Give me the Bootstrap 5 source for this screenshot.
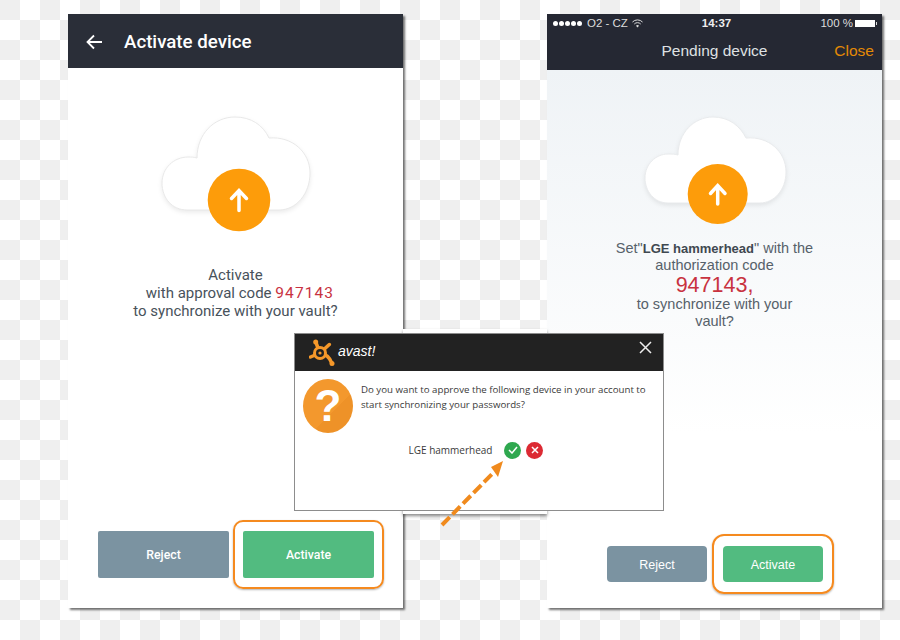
<!DOCTYPE html>
<html lang="en">
<head>
    <meta charset="UTF-8">
    <meta name="viewport" content="width=device-width, initial-scale=1.0">
    <title>Activate device</title>
    <link href="https://cdn.jsdelivr.net/npm/bootstrap@5.3.0/dist/css/bootstrap.min.css" rel="stylesheet">
    <style>
        html, body { margin: 0; height: 640px; overflow: hidden; }
        body {
            width: 900px;
            position: relative;
            font-family: Roboto, "Liberation Sans", sans-serif;
            background-color: #fff;
            background-image: conic-gradient(#fff 0 25%, #efefef 0 50%, #fff 0 75%, #efefef 0);
            background-size: 40px 40px;
        }
        .phone-win {
            position: absolute;
            top: 14px;
            width: 335px;
            height: 594px;
            background: #fff;
            box-shadow: 2px 2px 2px rgba(0,0,0,.55);
        }
        .win-android { left: 68px; }
        .win-ios { left: 547px; background: linear-gradient(#eff3f6 56px, #fff 420px); }
        .bar-dark { background: #2a2e38; color: #fff; }
        .bar-android { height: 54px; padding-left: 18px; gap: 21px; }
        .bar-android svg { margin-top: 1px; }
        .bar-android .bar-title { font-size: 18.700px; font-weight: 500; padding-top: 2px; }
        .bar-ios { height: 56px; background: #252833; }
        .status-line { height: 18px; padding: 0 6px; font: 11.500px "Liberation Sans", sans-serif; color: #ddd; }
        .status-line b { color: #eee; }
        .status-side { width: 120px; gap: 4px; white-space: nowrap; }
        .status-right { width: 116px; gap: 2px; }
        .sig-dot { width: 5px; height: 5px; margin-right: 1px; border-radius: 50%; background: #fff; }
        .batt { width: 20px; height: 7px; margin-right: 1px; background: #fff; position: relative; }
        .batt::after { content: ""; position: absolute; right: -2px; top: 2px; width: 1px; height: 3px; background: #ddd; }
        .ios-title { font: 15.500px "Liberation Sans", sans-serif; color: #dfe1e3; height: 38px; position: relative; }
        .ios-close { position: absolute; right: 8px; color: #e48a05; }
        .cloud-art { display: block; }
        .cloud-android { margin: 46px 0 0 87px; }
        .cloud-ios { margin: 42px 0 0 94px; }
        .cloud-shape { filter: drop-shadow(0 2px 2px rgba(0,0,0,.08)); }
        .msg-android { font-size: 15px; line-height: 18.200px; color: #48525b; margin-top: 27px; }
        .msg-android .code-red { font-size: 15.500px; letter-spacing: 1.100px; }
        .code-line { display: inline-block; padding-left: 9px; }
        .msg-ios { font: 14.500px/17px "Liberation Sans", sans-serif; color: #56616a; margin-top: 13px; }
        .msg-ios b { font-size: 13px; color: #3f4850; }
        .code-red { color: #c8323f; }
        .code-big { font-size: 21.500px; line-height: 22px; }
        .btn-mock {
            display: flex; align-items: center; justify-content: center;
            border-radius: 2px; color: #fff; font-size: 12.300px; font-weight: 500; padding: 2px 0 0; border: 0;
        }
        .btn-gray { background: #7b93a1; }
        .btn-grn { background: #52bb80; }
        .btn-gray:hover, .btn-gray:active { background: #7b93a1; color: #fff; }
        .btn-grn:hover, .btn-grn:active { background: #52bb80; color: #fff; }
        .row-android { position: absolute; left: 30px; bottom: 30px; gap: 14px; }
        .row-android .btn-mock { width: 131px; height: 47px; }
        .row-ios { position: absolute; left: 60px; bottom: 26px; gap: 16px; }
        .row-ios .btn-mock { width: 100px; height: 36px; border-radius: 4px; font: 12.500px "Liberation Sans", sans-serif; }
        .halo {
            position: absolute;
            border: 2.500px solid #f58a1f;
            border-radius: 10px;
            box-shadow: 0 1px 2px rgba(0,0,0,.3);
        }
        .halo-android { left: 233px; top: 520px; width: 151px; height: 69px; }
        .halo-ios { left: 712px; top: 534px; width: 122px; height: 60px; border-radius: 12px; }
        .dlg-back { position: absolute; left: 403px; top: 329px; width: 144px; height: 185px; background: #fff; box-shadow: 0 2px 3px rgba(0,0,0,.45); }
        .dlg {
            position: absolute; left: 294px; top: 333px; width: 370px; height: 178px;
            background: #fff; border: 1px solid #8d8d8d;
            font: 9.700px "Open Sans", sans-serif; color: #3a3a3a;
        }
        .dlg-head { height: 37px; background: #222; padding: 0 11px 0 14px; }
        .dlg-logo { font: italic 400 14px "Liberation Sans", sans-serif; color: #fff; margin: 0 0 4px 1px; }
        .dlg-close { margin-bottom: 10px; }
        .dlg-main { padding: 8px 10px 0 8px; gap: 8px; }
        .ask-mark {
            width: 50px; height: 54px; border-radius: 50%; flex: none; color: #fff;
            background: linear-gradient(135deg, #f3982d 60%, #ee9228 60%);
            font: 700 44px "Liberation Sans", sans-serif;
        }
        .ask-text { line-height: 15px; padding-top: 2.500px; white-space: nowrap; }
        .device-line { gap: 5px; margin-top: 8.500px; margin-right: 6px; }
        .device-name { font-size: 10px; }
        .round-ok, .round-no { width: 17px; height: 17px; border-radius: 50%; flex: none; }
        .round-ok { background: #2fa84f; margin-left: 7px; }
        .round-no { background: #dc2a33; }
        .arrow-art { position: absolute; left: 436px; top: 458px; }
    </style>
</head>
<body>
    <div class="phone-win win-android">
        <div class="bar-dark bar-android d-flex align-items-center">
            <svg width="17" height="16" viewBox="0 0 17 16"><path d="M16 8H2M8 1.500 1.500 8 8 14.500" fill="none" stroke="#fff" stroke-width="1.800"/></svg>
            <span class="bar-title">Activate device</span>
        </div>
        <svg class="cloud-art cloud-android" width="160" height="125" viewBox="155 114 160 125">
            <path class="cloud-shape" d="M187 210C172 210 162 198 162 183 162 168 174 157 188 157 191 157 194 157 197 158 197 134 214 117 235 117 251 117 263 125 269 138 292 136 310 152 310 173 310 194 296 210 279 210Z" fill="#fff" stroke="#e8e8e8"/>
            <circle cx="239" cy="200" r="31.300" fill="#fd9c0a"/>
            <path d="M239 210.500V191M231.500 198.500 239 190.500l7.500 8" fill="none" stroke="#fff" stroke-width="3.500" stroke-linecap="round"/>
        </svg>
        <div class="msg-android text-center">Activate<br><span class="code-line">with approval code <span class="code-red">947143</span></span><br>to synchronize with your vault?</div>
        <div class="row-android d-flex">
            <button class="btn btn-mock btn-gray">Reject</button>
            <button class="btn btn-mock btn-grn">Activate</button>
        </div>
    </div>

    <div class="phone-win win-ios">
        <div class="bar-ios">
            <div class="status-line d-flex align-items-center justify-content-between">
                <div class="status-side d-flex align-items-center">
                    <span class="d-flex"><i class="sig-dot"></i><i class="sig-dot"></i><i class="sig-dot"></i><i class="sig-dot"></i><i class="sig-dot"></i></span>
                    <span>O2 - CZ</span>
                    <svg width="11" height="9" viewBox="0 0 11 9"><path d="M.5 3a7 7 0 0 1 10 0M2.300 5a4.500 4.500 0 0 1 6.400 0" fill="none" stroke="#ddd"/><path d="M5.500 8.500 4 6.700a2.200 2.200 0 0 1 3 0z" fill="#ddd"/></svg>
                </div>
                <b>14:37</b>
                <div class="status-right d-flex align-items-center justify-content-end">
                    <span>100 %</span><span class="batt"></span>
                </div>
            </div>
            <div class="ios-title d-flex align-items-center justify-content-center">Pending device<span class="ios-close">Close</span></div>
        </div>
        <svg class="cloud-art cloud-ios" width="150" height="115" viewBox="641 112 150 115">
            <path class="cloud-shape" d="M668 203C654 203 645 191 645 178 645 164 656 154 668 154 672 154 675 154 678 155 678 133 694 117 713 117 729 117 740 126 746 138 769 136 786 152 786 172 786 190 774 203 760 203Z" fill="#fff" stroke="#e8eaec"/>
            <circle cx="717.700" cy="194" r="30" fill="#fd9c0a"/>
            <path d="M717.700 204V186M710.500 193.500 717.700 185.500l7.300 8" fill="none" stroke="#fff" stroke-width="3.500" stroke-linecap="round"/>
        </svg>
        <div class="msg-ios text-center">Set"<b>LGE hammerhead</b>" with the<br>authorization code<br><span class="code-red code-big">947143,</span><br>to synchronize with your<br>vault?</div>
        <div class="row-ios d-flex">
            <button class="btn btn-mock btn-gray">Reject</button>
            <button class="btn btn-mock btn-grn">Activate</button>
        </div>
    </div>

    <div class="halo halo-android"></div>
    <div class="halo halo-ios"></div>

    <div class="dlg-back"></div>
    <div class="dlg">
        <div class="dlg-head d-flex align-items-center justify-content-between">
            <div class="d-flex align-items-center">
                <svg width="28" height="28" viewBox="0 0 28 28"><path d="M11 14 6.700 3M11 14 20.300 5.500M11 14 1.500 18M11 14C18 15 21 19 23 24.500" fill="none" stroke="#f5982a" stroke-width="3.500" stroke-linecap="round"/><circle cx="6.700" cy="3" r="2.500" fill="#f5982a"/><circle cx="23" cy="24.500" r="2.500" fill="#f5982a"/><circle cx="11" cy="14" r="7" fill="#f5982a"/><circle cx="11" cy="14" r="4" fill="#222"/><circle cx="11" cy="14" r="1.600" fill="#f5982a"/></svg>
                <span class="dlg-logo">avast!</span>
            </div>
            <svg class="dlg-close" width="13" height="13" viewBox="0 0 13 13"><path d="M1 1l11 11M12 1 1 12" stroke="#eee" stroke-width="1.500"/></svg>
        </div>
        <div class="dlg-main d-flex">
            <div class="ask-mark d-flex align-items-center justify-content-center">?</div>
            <div class="ask-text">Do you want to approve the following device in your account to<br>start synchronizing your passwords?</div>
        </div>
        <div class="device-line d-flex align-items-center justify-content-center">
            <span class="device-name">LGE hammerhead</span>
            <span class="round-ok d-flex align-items-center justify-content-center"><svg width="10" height="8" viewBox="0 0 10 8"><path d="M1 4l3 3 5-6" fill="none" stroke="#fff" stroke-width="1.500"/></svg></span>
            <span class="round-no d-flex align-items-center justify-content-center"><svg width="8" height="8" viewBox="0 0 8 8"><path d="M1 1l6 6M7 1 1 7" stroke="#fff" stroke-width="1.500"/></svg></span>
        </div>
    </div>
    <svg class="arrow-art" width="72" height="72" viewBox="0 0 72 72"><path d="M6 67 58 14" fill="none" stroke="#f08a1d" stroke-width="4" stroke-dasharray="11 4"/><path d="M67 3 55 9 62 19z" fill="#f08a1d"/></svg>
</body>
</html>
